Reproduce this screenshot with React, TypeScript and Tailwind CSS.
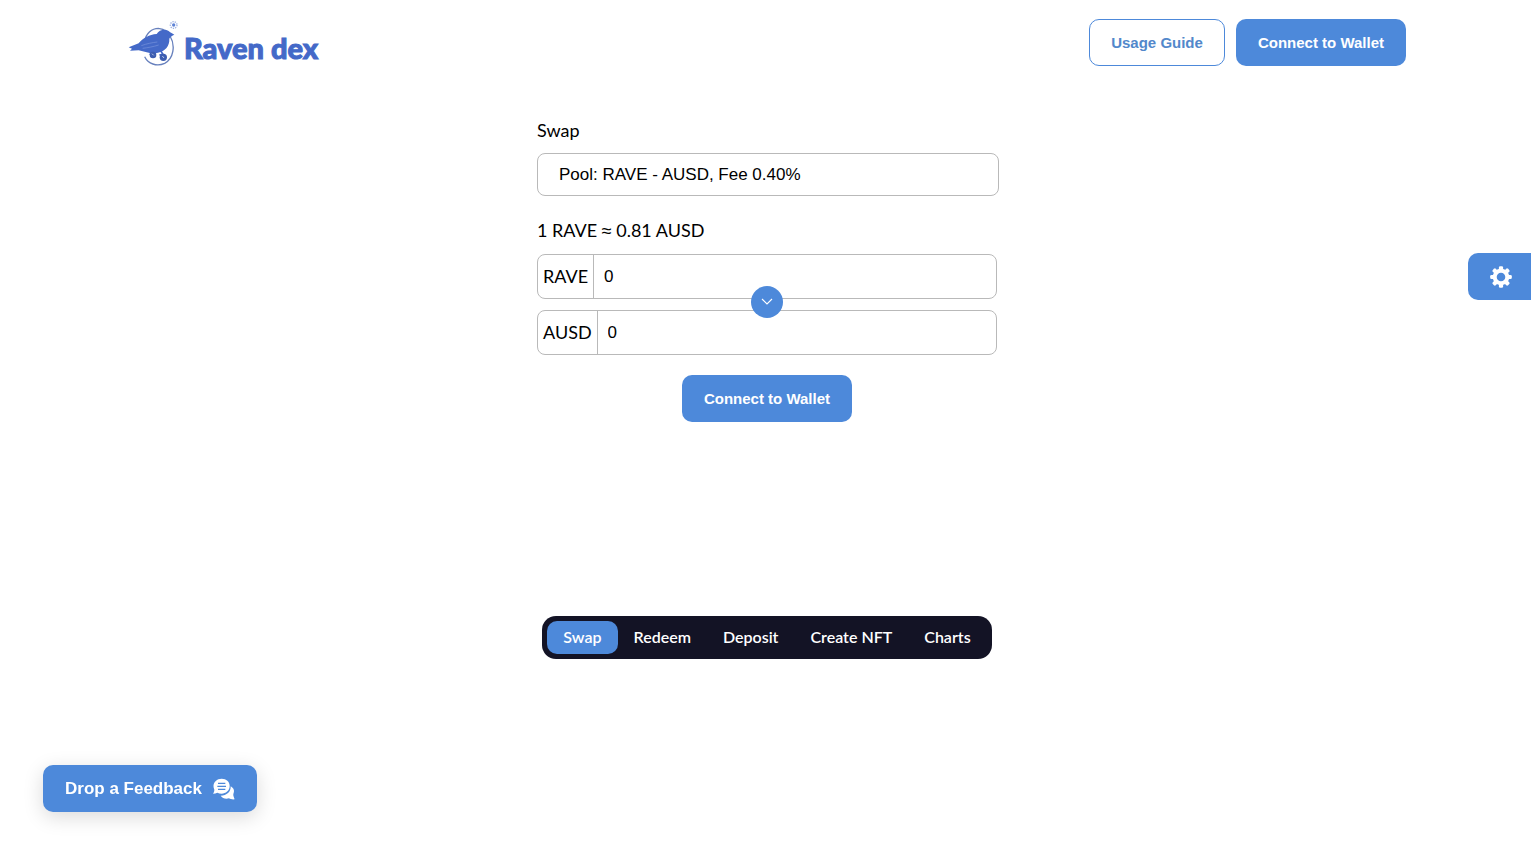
import { useState } from "react";

const tabs = ["Swap", "Redeem", "Deposit", "Create NFT", "Charts"];
const gearTeeth = [0, 45, 90, 135, 180, 225, 270, 315];

function Logo() {
  return (
    <a href="#" className="flex items-center text-[#4469c8]">
      <svg viewBox="22 16 150 138" className="h-[46px] w-[50px]" aria-hidden="true">
        <path
          d="M72 80C76 56 94 41 113 41C124 42 132 46 138 51M148 64C165 92 159 132 132 146C108 157 82 147 72 126"
          fill="none"
          stroke="#6780bd"
          strokeWidth="4"
        />
        <path
          d="M24 98L54 86C66 70 86 60 108 58C114 48 128 43 139 47C146 50 150 55 161 60C154 64 149 65 146 72C147 94 134 109 112 114C101 117 88 116 78 113L54 107L28 108L34 102Z"
          fill="currentColor"
        />
        <path d="M62 93C78 87 94 84 110 82M66 101C82 99 99 96 114 91" stroke="#7894dc" strokeWidth="2" fill="none" />
        <path d="M96 111L90 117L106 118M119 107L127 119L116 121" stroke="currentColor" strokeWidth="5" fill="none" />
        <circle cx="97" cy="121" r="10" fill="#3c5db0" />
        <circle cx="128" cy="128" r="11" fill="#3c5db0" />
        <path d="M94 117l5 5M125 124l5 6" stroke="#b9c8ec" strokeWidth="3" />
        <circle cx="159" cy="31" r="5" fill="#5f83d6" />
        <circle cx="159" cy="31" r="10" fill="none" stroke="#9db1e4" strokeWidth="4" strokeDasharray="4 3" />
      </svg>
      <span className="ml-[6px] pt-[10px] font-['Lato',sans-serif] text-[29px] leading-9 font-black [-webkit-text-stroke:1px_currentColor]">
        Raven dex
      </span>
    </a>
  );
}

function GearIcon() {
  return (
    <svg viewBox="-11 -11 22 22" className="size-[22px]" aria-hidden="true">
      <circle r="6.3" fill="none" stroke="currentColor" strokeWidth="4" />
      {gearTeeth.map((angle) => (
        <rect key={angle} x="-2.1" y="-10.8" width="4.2" height="5" rx="1.3" fill="currentColor" transform={`rotate(${angle})`} />
      ))}
    </svg>
  );
}

function ChatIcon() {
  return (
    <svg viewBox="0 0 66 66" className="size-[22px]" aria-hidden="true">
      <path
        d="M53 25C62 30 66 38 61 48C60 53 63 58 65 64C58 65 52 63 48 61C38 64 28 61 23 53C41 53 54 42 53 25Z"
        fill="#fff"
      />
      <path
        d="M26 2C40 2 50 11 50 24C50 38 38 47 26 47C21 47 17 46 13 44C9 46 5 47 0 47C3 43 4 39 4 35C-4 18 8 2 26 2Z"
        fill="#fff"
      />
      <path d="M15 16H37M13 25H39M15 34H37" stroke="#4d89da" strokeWidth="4" />
    </svg>
  );
}

function TokenRow({ token }: { token: string }) {
  const [value, setValue] = useState("0");
  const id = `amount-${token}`;
  return (
    <div className="flex h-[45px] overflow-hidden rounded-lg border border-[#b9b9b9]">
      <label htmlFor={id} className="flex items-center border-r border-[#b9b9b9] px-[5px] pb-[2px]">
        {token}
      </label>
      <input
        id={id}
        value={value}
        onChange={(e) => setValue(e.target.value)}
        className="min-w-0 flex-1 px-[10px] font-['Liberation_Sans',sans-serif] text-[17px] outline-none"
      />
    </div>
  );
}

const solid =
  "h-[47px] rounded-[10px] bg-[#4d89da] px-[22px] font-['Liberation_Sans',sans-serif] text-[15px] font-bold text-white";

export default function App() {
  const [tab, setTab] = useState("Swap");
  return (
    <div className="flex min-h-screen flex-col bg-white font-['Lato',sans-serif] text-lg leading-6 text-black">
      <header className="flex items-center justify-between pt-[19px] pr-[125px] pl-32">
        <Logo />
        <div className="flex gap-[11px]">
          <button className="h-[47px] rounded-[10px] border border-[#4d89da] bg-white px-[21px] font-['Liberation_Sans',sans-serif] text-[15px] font-bold text-[#5288cb]">
            Usage Guide
          </button>
          <button className={solid}>Connect to Wallet</button>
        </div>
      </header>

      <div className="flex flex-col pl-[3px]">
        <main className="mx-auto flex w-full max-w-[460px] flex-col pt-[52px]">
          <label htmlFor="pool">Swap</label>
          <select
            id="pool"
            className="mt-[11px] -mr-[2px] h-[43px] appearance-none rounded-lg border border-[#b9b9b9] bg-white px-[21px] font-['Liberation_Sans',sans-serif] text-[17px] outline-none"
          >
            <option>Pool: RAVE - AUSD, Fee 0.40%</option>
          </select>
          <p className="mt-[22px]">
            1 RAVE <span className="font-['Liberation_Sans',sans-serif]">≈</span> 0.81 AUSD
          </p>
          <div className="relative mt-[11px] flex flex-col gap-[11px]">
            <TokenRow token="RAVE" />
            <TokenRow token="AUSD" />
            <button
              aria-label="Switch tokens"
              className="absolute top-8 left-1/2 flex size-8 -translate-x-1/2 items-center justify-center rounded-full bg-[#4d89da]"
            >
              <svg viewBox="0 0 12 8" className="h-2 w-3" aria-hidden="true">
                <path d="M1 1l5 5 5-5" fill="none" stroke="#fff" strokeWidth="1.1" />
              </svg>
            </button>
          </div>
          <button className={`${solid} mt-5 self-center`}>Connect to Wallet</button>
        </main>

        <nav className="mt-[194px] flex self-center rounded-[14px] bg-[#131325] p-[5px] text-base text-white">
          {tabs.map((name) => (
            <button
              key={name}
              onClick={() => setTab(name)}
              className={`h-[33px] rounded-[10px] px-4 pb-[2px] font-semibold ${name === tab ? "bg-[#4d89da]" : ""}`}
            >
              {name}
            </button>
          ))}
        </nav>
      </div>

      <button
        aria-label="Settings"
        className="fixed top-[253px] right-0 flex h-[47px] w-[63px] items-center rounded-l-[10px] bg-[#4d89da] pl-[22px] text-white"
      >
        <GearIcon />
      </button>

      <button className="fixed bottom-[33px] left-[43px] flex h-[47px] items-center gap-[11px] rounded-[10px] bg-[#4d89da] px-[22px] font-['Liberation_Sans',sans-serif] text-[17px] font-bold text-white shadow-[0_5px_20px_rgba(0,0,0,0.15)]">
        Drop a Feedback
        <ChatIcon />
      </button>
    </div>
  );
}
